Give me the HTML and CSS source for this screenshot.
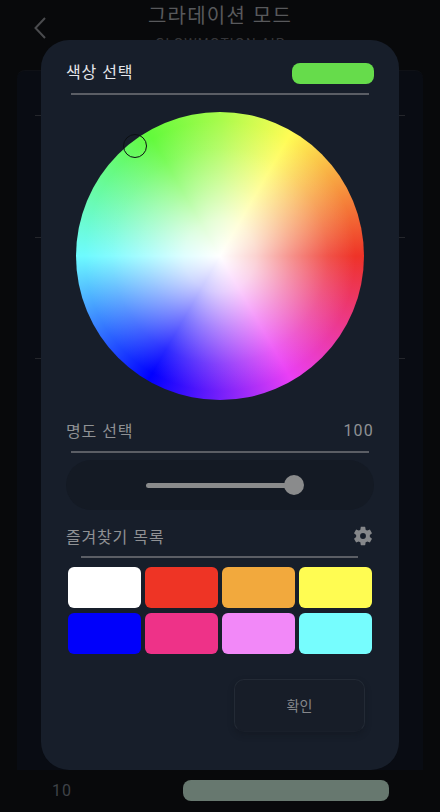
FILE: index.html
```html
<!DOCTYPE html>
<html lang="ko">
<head>
<meta charset="utf-8">
<title>그라데이션 모드</title>
<link rel="stylesheet" href="styles.css">
</head>
<body>
<div class="page">
  <header class="top">
    <svg class="back" width="14" height="24" viewBox="0 0 14 24" aria-hidden="true"><path d="M12 2 L2.5 12 L12 22" fill="none" stroke="#4a4b4e" stroke-width="2"/></svg>
    <h1 class="title">그라데이션 모드</h1>
    <p class="sub">GLOWMOTION AIR</p>
  </header>
  <div class="panel">
    <div class="row"></div>
    <div class="row"></div>
    <div class="row"></div>
    <div class="row-last"></div>
  </div>
  <div class="foot">
    <span class="foot-num">10</span>
    <span class="foot-bar"></span>
  </div>
</div>

<section class="modal">
  <div class="head head-color">
    <span class="head-main">색상 선택</span>
    <span class="current"></span>
  </div>
  <div class="rule"></div>

  <div class="wheel">
    <span class="picker"></span>
  </div>

  <div class="head head-bright">
    <span>명도 선택</span>
    <span class="value">100</span>
  </div>
  <div class="rule"></div>

  <div class="slider-box">
    <div class="track"><span class="thumb"></span></div>
  </div>

  <div class="head head-fav">
    <span>즐겨찾기 목록</span>
    <svg class="gear" width="22" height="22" viewBox="0 0 24 24" aria-hidden="true"><path fill="#85878a" fill-rule="evenodd" d="M19.43 12.98c.04-.32.07-.64.07-.98s-.03-.66-.07-.98l2.11-1.65c.19-.15.24-.42.12-.64l-2-3.46c-.12-.22-.39-.3-.61-.22l-2.49 1c-.52-.4-1.08-.73-1.69-.98l-.38-2.65A.49.49 0 0 0 14 2h-4c-.25 0-.46.18-.49.42l-.38 2.65c-.61.25-1.17.59-1.69.98l-2.49-1c-.23-.09-.49 0-.61.22l-2 3.46c-.13.22-.07.49.12.64l2.11 1.65c-.04.32-.07.65-.07.98s.03.66.07.98l-2.11 1.65c-.19.15-.24.42-.12.64l2 3.46c.12.22.39.3.61.22l2.49-1c.52.4 1.08.73 1.69.98l.38 2.65c.03.24.24.42.49.42h4c.25 0 .46-.18.49-.42l.38-2.65c.61-.25 1.17-.59 1.69-.98l2.49 1c.23.09.49 0 .61-.22l2-3.46c.12-.22.07-.49-.12-.64l-2.11-1.65zM12 15.2a3.2 3.2 0 1 1 0-6.4 3.2 3.2 0 0 1 0 6.4z"/></svg>
  </div>
  <div class="rule rule-fav"></div>

  <div class="swatches">
    <span class="swatch white"></span>
    <span class="swatch red"></span>
    <span class="swatch orange"></span>
    <span class="swatch yellow"></span>
    <span class="swatch blue"></span>
    <span class="swatch pink"></span>
    <span class="swatch violet"></span>
    <span class="swatch cyan"></span>
  </div>

  <div class="actions">
    <button class="confirm" type="button">확인</button>
  </div>
</section>
</body>
</html>
```
FILE: styles.css
```css
* { box-sizing: border-box; }
html, body { margin: 0; height: 100%; }
body {
  position: relative;
  width: 440px;
  height: 812px;
  overflow: hidden;
  background: #08090b;
  font-family: "Noto Sans CJK KR", "Noto Sans", sans-serif;
}
.page { display: flex; flex-direction: column; height: 812px; }
.top { position: relative; height: 70px; text-align: center; }
.back { position: absolute; left: 33px; top: 16px; }
.title {
  margin: 0;
  padding-top: 1px;
  font-size: 20px;
  line-height: 28px;
  font-weight: 400;
  letter-spacing: 1.2px;
  color: #58595c;
}
.sub {
  margin: 6px 0 0;
  font-size: 14px;
  line-height: 16px;
  letter-spacing: 0.8px;
  color: #35363a;
}
.panel {
  margin: 0 17px;
  height: 700px;
  padding: 0 18px;
  border-radius: 8px 8px 0 0;
  background: #090c13;
  border-top: 1px solid #0f1116;
  display: flex;
  flex-direction: column;
}
.row { height: 121.5px; border-bottom: 1px solid #24262b; flex: none; }
.row:first-child { height: 45px; }
.row-last { flex: 1; }
.foot {
  position: absolute;
  left: 52px;
  top: 779px;
  width: 337px;
  display: flex;
  align-items: center;
  justify-content: space-between;
  height: 23px;
}
.foot-num { font-family: "Roboto", sans-serif; font-size: 16px; letter-spacing: 1px; color: #3f4247; }
.foot-bar { width: 206px; height: 21px; border-radius: 8px; background: #67786f; }

.modal {
  position: absolute;
  left: 41px;
  top: 40px;
  width: 358px;
  height: 730px;
  border-radius: 28px;
  background: #171e2a;
  padding: 0 25px;
  color: #8f9194;
  font-size: 16px;
}
.head {
  display: flex;
  align-items: center;
  justify-content: space-between;
  line-height: 24px;
  letter-spacing: 0.8px;
}
.head-color { height: 23px; margin-top: 21px; }
.head-main { color: #e4e6ea; font-size: 16px; margin-bottom: 3px; }
.current { width: 82px; height: 21px; border-radius: 8px; background: #66dc4b; margin: 2px 0 0; }
.rule {
  height: 2px;
  margin: 8px 5px 0;
  background: #5b5e65;
}
.head-color + .rule { margin-top: 9px; }
.wheel {
  position: relative;
  width: 288px;
  height: 288px;
  margin: 17px 0 0 10px;
  border-radius: 50%;
  background:
    radial-gradient(circle closest-side, rgba(255,255,255,1) 0, rgba(255,255,255,.78) 25%, rgba(255,255,255,.46) 50%, rgba(255,255,255,.16) 75%, rgba(255,255,255,0) 94%),
    conic-gradient(from 0deg, #a8fb4c 0deg, #fffc55 30deg, #ee3328 90deg, #ea3ff5 150deg, #0000ff 210deg, #6efbff 270deg, #63fa3c 330deg, #a8fb4c 360deg);
}
.picker {
  position: absolute;
  left: 47px;
  top: 22px;
  width: 24px;
  height: 24px;
  border: 1.5px solid #0b0f12;
  border-radius: 50%;
}
.head-bright { margin-top: 18px; height: 24px; }
.head-bright .value { font-family: "Roboto", sans-serif; font-size: 16px; letter-spacing: 1.2px; padding-top: 1px; }
.head-bright + .rule { margin-top: 9px; }
.slider-box {
  display: flex;
  align-items: center;
  justify-content: center;
  height: 50px;
  margin-top: 7px;
  border-radius: 25px;
  background: #141a24;
}
.track {
  position: relative;
  width: 148px;
  height: 5px;
  margin-left: -1px;
  border-radius: 3px;
  background: #8a8b8c;
}
.thumb {
  position: absolute;
  right: -10px;
  top: -8px;
  width: 20px;
  height: 20px;
  border-radius: 50%;
  background: #8a8b8c;
}
.head-fav { margin-top: 14px; height: 24px; }
.rule-fav { margin: 8px 16px 0 15px; }
.swatches {
  display: grid;
  grid-template-columns: repeat(4, 73px);
  grid-auto-rows: 41px;
  gap: 5px 4px;
  margin: 9px 0 0 2px;
}
.swatch { border-radius: 6px; }
.white { background: #ffffff; }
.red { background: #ee3425; }
.orange { background: #f2a93d; }
.yellow { background: #fffc52; }
.blue { background: #0000fb; }
.pink { background: #ee3288; }
.violet { background: #f288f8; }
.cyan { background: #76fdfe; }
.actions { display: flex; justify-content: flex-end; margin-top: 25px; margin-right: 9px; }
.confirm {
  width: 131px;
  height: 53px;
  border: 1px solid #232a35;
  border-bottom-color: #191f2a;
  border-radius: 10px;
  background: #171d28;
  box-shadow: 0 3px 6px rgba(12,16,24,.3);
  color: #85878b;
  font: 400 14px/1 "Noto Sans CJK KR", sans-serif;
  padding: 0 0 2px 0;
}
```
